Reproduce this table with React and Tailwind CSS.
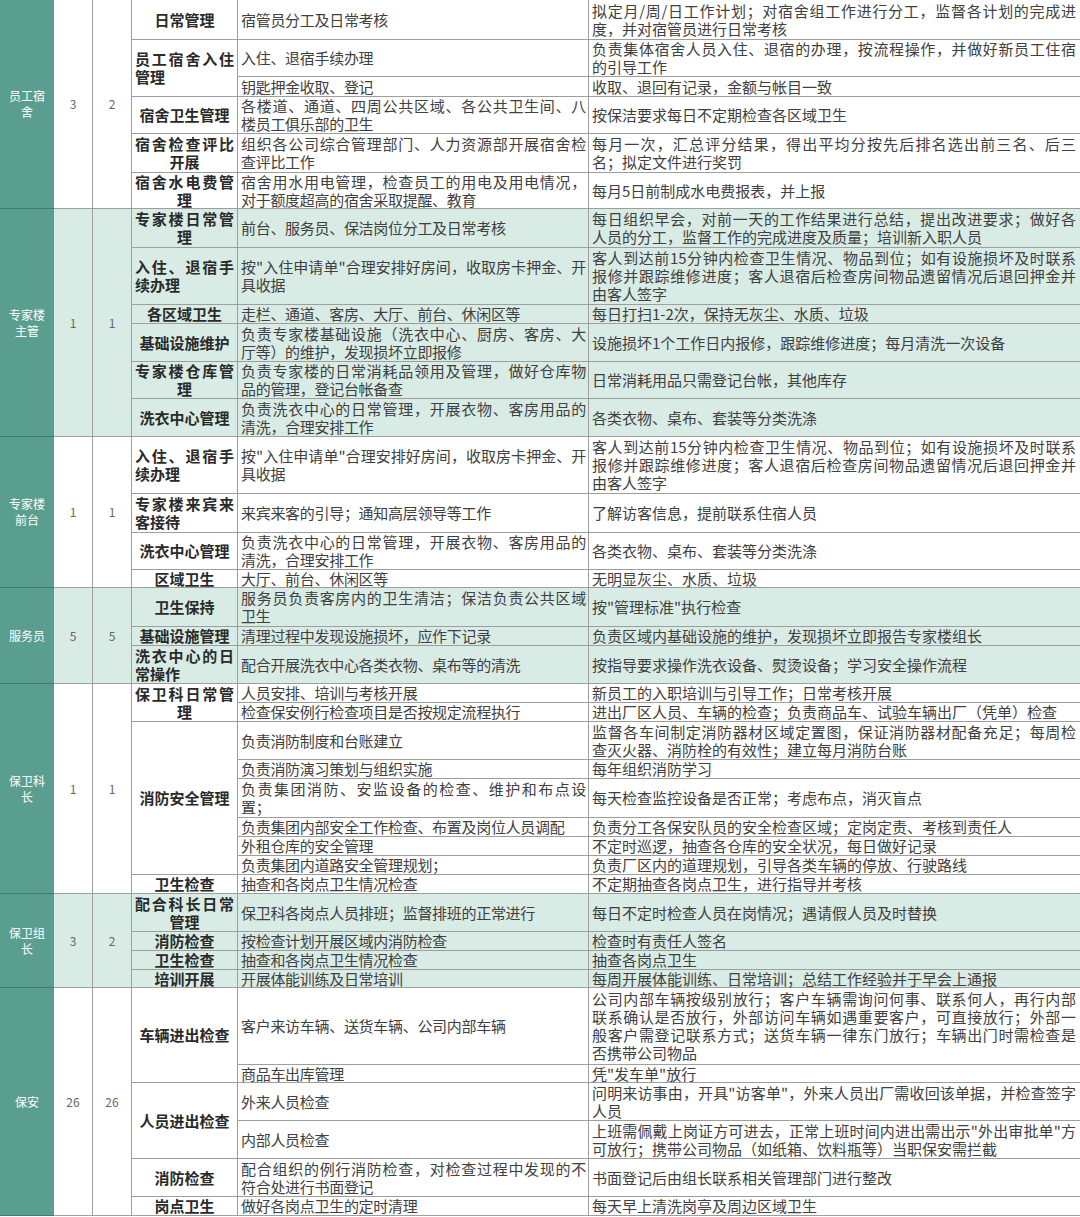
import React from 'react';

const sections = [
  {
    name: ['员工宿', '舍'], a: '3', b: '2', green: false,
    rowsCls: 'grid-rows-[40px_37px_20px_37px_39px_36px]',
    groups: [
      { title: ['日常管理'], align: 'center', rows: [
        { c5: ['宿管员分工及日常考核'], c6: ['拟定月/周/日工作计划；对宿舍组工作进行分工，监督各计划的完成进', '度，并对宿管员进行日常考核'] },
      ] },
      { title: ['员工宿舍入住', '管理'], align: 'left', rows: [
        { c5: ['入住、退宿手续办理'], c6: ['负责集体宿舍人员入住、退宿的办理，按流程操作，并做好新员工住宿', '的引导工作'] },
        { c5: ['钥匙押金收取、登记'], c6: ['收取、退回有记录，金额与帐目一致'] },
      ] },
      { title: ['宿舍卫生管理'], align: 'center', rows: [
        { c5: ['各楼道、通道、四周公共区域、各公共卫生间、八', '楼员工俱乐部的卫生'], c6: ['按保洁要求每日不定期检查各区域卫生'] },
      ] },
      { title: ['宿舍检查评比', '开展'], align: 'center', rows: [
        { c5: ['组织各公司综合管理部门、人力资源部开展宿舍检', '查评比工作'], c6: ['每月一次，汇总评分结果，得出平均分按先后排名选出前三名、后三', '名；拟定文件进行奖罚'] },
      ] },
      { title: ['宿舍水电费管', '理'], align: 'center', rows: [
        { c5: ['宿舍用水用电管理，检查员工的用电及用电情况，', '对于额度超高的宿舍采取提醒、教育'], c6: ['每月5日前制成水电费报表，并上报'] },
      ] },
    ],
  },
  {
    name: ['专家楼', '主管'], a: '1', b: '1', green: true,
    rowsCls: 'grid-rows-[39px_57px_19px_38px_37px_38px]',
    groups: [
      { title: ['专家楼日常管', '理'], align: 'center', rows: [
        { c5: ['前台、服务员、保洁岗位分工及日常考核'], c6: ['每日组织早会，对前一天的工作结果进行总结，提出改进要求；做好各', '人员的分工，监督工作的完成进度及质量；培训新入职人员'] },
      ] },
      { title: ['入住、退宿手', '续办理'], align: 'left', rows: [
        { c5: ['按"入住申请单"合理安排好房间，收取房卡押金、开', '具收据'], c6: ['客人到达前15分钟内检查卫生情况、物品到位；如有设施损坏及时联系', '报修并跟踪维修进度；客人退宿后检查房间物品遗留情况后退回押金并', '由客人签字'] },
      ] },
      { title: ['各区域卫生'], align: 'center', rows: [
        { c5: ['走栏、通道、客房、大厅、前台、休闲区等'], c6: ['每日打扫1-2次，保持无灰尘、水质、垃圾'] },
      ] },
      { title: ['基础设施维护'], align: 'center', rows: [
        { c5: ['负责专家楼基础设施（洗衣中心、厨房、客房、大', '厅等）的维护，发现损坏立即报修'], c6: ['设施损坏1个工作日内报修，跟踪维修进度；每月清洗一次设备'] },
      ] },
      { title: ['专家楼仓库管', '理'], align: 'center', rows: [
        { c5: ['负责专家楼的日常消耗品领用及管理，做好仓库物', '品的管理，登记台帐备查'], c6: ['日常消耗用品只需登记台帐，其他库存'] },
      ] },
      { title: ['洗衣中心管理'], align: 'center', rows: [
        { c5: ['负责洗衣中心的日常管理，开展衣物、客房用品的', '清洗，合理安排工作'], c6: ['各类衣物、桌布、套装等分类洗涤'] },
      ] },
    ],
  },
  {
    name: ['专家楼', '前台'], a: '1', b: '1', green: false,
    rowsCls: 'grid-rows-[57px_39px_37px_18px]',
    groups: [
      { title: ['入住、退宿手', '续办理'], align: 'left', rows: [
        { c5: ['按"入住申请单"合理安排好房间，收取房卡押金、开', '具收据'], c6: ['客人到达前15分钟内检查卫生情况、物品到位；如有设施损坏及时联系', '报修并跟踪维修进度；客人退宿后检查房间物品遗留情况后退回押金并', '由客人签字'] },
      ] },
      { title: ['专家楼来宾来', '客接待'], align: 'left', rows: [
        { c5: ['来宾来客的引导；通知高层领导等工作'], c6: ['了解访客信息，提前联系住宿人员'] },
      ] },
      { title: ['洗衣中心管理'], align: 'center', rows: [
        { c5: ['负责洗衣中心的日常管理，开展衣物、客房用品的', '清洗，合理安排工作'], c6: ['各类衣物、桌布、套装等分类洗涤'] },
      ] },
      { title: ['区域卫生'], align: 'center', rows: [
        { c5: ['大厅、前台、休闲区等'], c6: ['无明显灰尘、水质、垃圾'] },
      ] },
    ],
  },
  {
    name: ['服务员'], a: '5', b: '5', green: true,
    rowsCls: 'grid-rows-[39px_19px_38px]',
    groups: [
      { title: ['卫生保持'], align: 'center', rows: [
        { c5: ['服务员负责客房内的卫生清洁；保洁负责公共区域', '卫生'], c6: ['按"管理标准"执行检查'] },
      ] },
      { title: ['基础设施管理'], align: 'center', rows: [
        { c5: ['清理过程中发现设施损坏，应作下记录'], c6: ['负责区域内基础设施的维护，发现损坏立即报告专家楼组长'] },
      ] },
      { title: ['洗衣中心的日', '常操作'], align: 'left', rows: [
        { c5: ['配合开展洗衣中心各类衣物、桌布等的清洗'], c6: ['按指导要求操作洗衣设备、熨烫设备；学习安全操作流程'] },
      ] },
    ],
  },
  {
    name: ['保卫科', '长'], a: '1', b: '1', green: false,
    rowsCls: 'grid-rows-[19px_19px_38px_19px_39px_19px_19px_19px_19px]',
    groups: [
      { title: ['保卫科日常管', '理'], align: 'center', rows: [
        { c5: ['人员安排、培训与考核开展'], c6: ['新员工的入职培训与引导工作；日常考核开展'] },
        { c5: ['检查保安例行检查项目是否按规定流程执行'], c6: ['进出厂区人员、车辆的检查；负责商品车、试验车辆出厂（凭单）检查'] },
      ] },
      { title: ['消防安全管理'], align: 'center', rows: [
        { c5: ['负责消防制度和台账建立'], c6: ['监督各车间制定消防器材区域定置图，保证消防器材配备充足；每周检', '查灭火器、消防栓的有效性；建立每月消防台账'] },
        { c5: ['负责消防演习策划与组织实施'], c6: ['每年组织消防学习'] },
        { c5: ['负责集团消防、安监设备的检查、维护和布点设', '置；'], c6: ['每天检查监控设备是否正常；考虑布点，消灭盲点'] },
        { c5: ['负责集团内部安全工作检查、布置及岗位人员调配'], c6: ['负责分工各保安队员的安全检查区域；定岗定责、考核到责任人'] },
        { c5: ['外租仓库的安全管理'], c6: ['不定时巡逻，抽查各仓库的安全状况，每日做好记录'] },
        { c5: ['负责集团内道路安全管理规划；'], c6: ['负责厂区内的道理规划，引导各类车辆的停放、行驶路线'] },
      ] },
      { title: ['卫生检查'], align: 'center', rows: [
        { c5: ['抽查和各岗点卫生情况检查'], c6: ['不定期抽查各岗点卫生，进行指导并考核'] },
      ] },
    ],
  },
  {
    name: ['保卫组', '长'], a: '3', b: '2', green: true,
    rowsCls: 'grid-rows-[38px_19px_19px_18px]',
    groups: [
      { title: ['配合科长日常', '管理'], align: 'center', rows: [
        { c5: ['保卫科各岗点人员排班；监督排班的正常进行'], c6: ['每日不定时检查人员在岗情况；遇请假人员及时替换'] },
      ] },
      { title: ['消防检查'], align: 'center', rows: [
        { c5: ['按检查计划开展区域内消防检查'], c6: ['检查时有责任人签名'] },
      ] },
      { title: ['卫生检查'], align: 'center', rows: [
        { c5: ['抽查和各岗点卫生情况检查'], c6: ['抽查各岗点卫生'] },
      ] },
      { title: ['培训开展'], align: 'center', rows: [
        { c5: ['开展体能训练及日常培训'], c6: ['每周开展体能训练、日常培训；总结工作经验并于早会上通报'] },
      ] },
    ],
  },
  {
    name: ['保安'], a: '26', b: '26', green: false,
    rowsCls: 'grid-rows-[77px_18px_38px_38px_38px_19px]',
    groups: [
      { title: ['车辆进出检查'], align: 'center', rows: [
        { c5: ['客户来访车辆、送货车辆、公司内部车辆'], c6: ['公司内部车辆按级别放行；客户车辆需询问何事、联系何人，再行内部', '联系确认是否放行，外部访问车辆如遇重要客户，可直接放行；外部一', '般客户需登记联系方式；送货车辆一律东门放行；车辆出门时需检查是', '否携带公司物品'] },
        { c5: ['商品车出库管理'], c6: ['凭"发车单"放行'] },
      ] },
      { title: ['人员进出检查'], align: 'center', rows: [
        { c5: ['外来人员检查'], c6: ['问明来访事由，开具"访客单"，外来人员出厂需收回该单据，并检查签字', '人员'] },
        { c5: ['内部人员检查'], c6: ['上班需佩戴上岗证方可进去，正常上班时间内进出需出示"外出审批单"方', '可放行；携带公司物品（如纸箱、饮料瓶等）当职保安需拦截'] },
      ] },
      { title: ['消防检查'], align: 'center', rows: [
        { c5: ['配合组织的例行消防检查，对检查过程中发现的不', '符合处进行书面登记'], c6: ['书面登记后由组长联系相关管理部门进行整改'] },
      ] },
      { title: ['岗点卫生'], align: 'center', rows: [
        { c5: ['做好各岗点卫生的定时清理'], c6: ['每天早上清洗岗亭及周边区域卫生'] },
      ] },
    ],
  },
];

const spans = {
  1: 'row-span-1',
  2: 'row-span-2',
  6: 'row-span-6',
};

// one div per visual line so the wraps land where the sheet has them
const Lines = ({ lines, last = 'left' }) =>
  lines.map((t, i) => {
    const cls =
      i < lines.length - 1
        ? 'text-justify [text-align-last:justify]'
        : last === 'center'
        ? 'text-center'
        : 'text-left';
    return (
      <div key={i} className={cls}>
        {t}
      </div>
    );
  });

export default function App() {
  const cell = 'flex flex-col justify-center border-r border-b border-[#9e9e9e] min-w-0';

  return (
    <div className="w-[1080px] h-[1217px] overflow-hidden bg-white leading-[18px] font-['Noto_Sans_CJK_SC','Noto_Sans',sans-serif]">
      {sections.map((sec, si) => (
        <div
          key={si}
          className={`grid grid-cols-[54px_39px_39px_106px_351px_491px] ${sec.rowsCls} ${sec.green ? 'bg-[#d8ebe5]' : 'bg-white'}`}
        >
          <div className="col-start-1 row-span-full flex flex-col justify-center bg-[#5a9e90] border-b border-[#3f7f72] text-white text-[12px] leading-[16px] text-center">
            {sec.name.map((n, k) => (
              <div key={k}>{n}</div>
            ))}
          </div>
          <div className={`col-start-2 row-span-full ${cell} text-center text-[12px] text-[#666]`}>{sec.a}</div>
          <div className={`col-start-3 row-span-full ${cell} text-center text-[12px] text-[#666]`}>{sec.b}</div>
          {sec.groups.map((g, gi) => (
            <React.Fragment key={gi}>
              <div
                className={`col-start-4 ${spans[g.rows.length]} ${cell} px-[3px] text-[15px] font-semibold text-[#2a2a2a] ${g.title.length === 1 ? 'text-center' : ''}`}
              >
                <Lines lines={g.title} last={g.align} />
              </div>
              {g.rows.map((r, ri) => (
                <React.Fragment key={ri}>
                  <div className={`col-start-5 ${cell} pl-[3px] pr-[2px] text-[15px] tracking-[-0.3px] text-[#404040]`}>
                    <Lines lines={r.c5} />
                  </div>
                  <div className={`col-start-6 ${cell} border-r-0 pl-[3px] pr-[4px] text-[15px] text-[#404040]`}>
                    <Lines lines={r.c6} />
                  </div>
                </React.Fragment>
              ))}
            </React.Fragment>
          ))}
        </div>
      ))}
    </div>
  );
}
